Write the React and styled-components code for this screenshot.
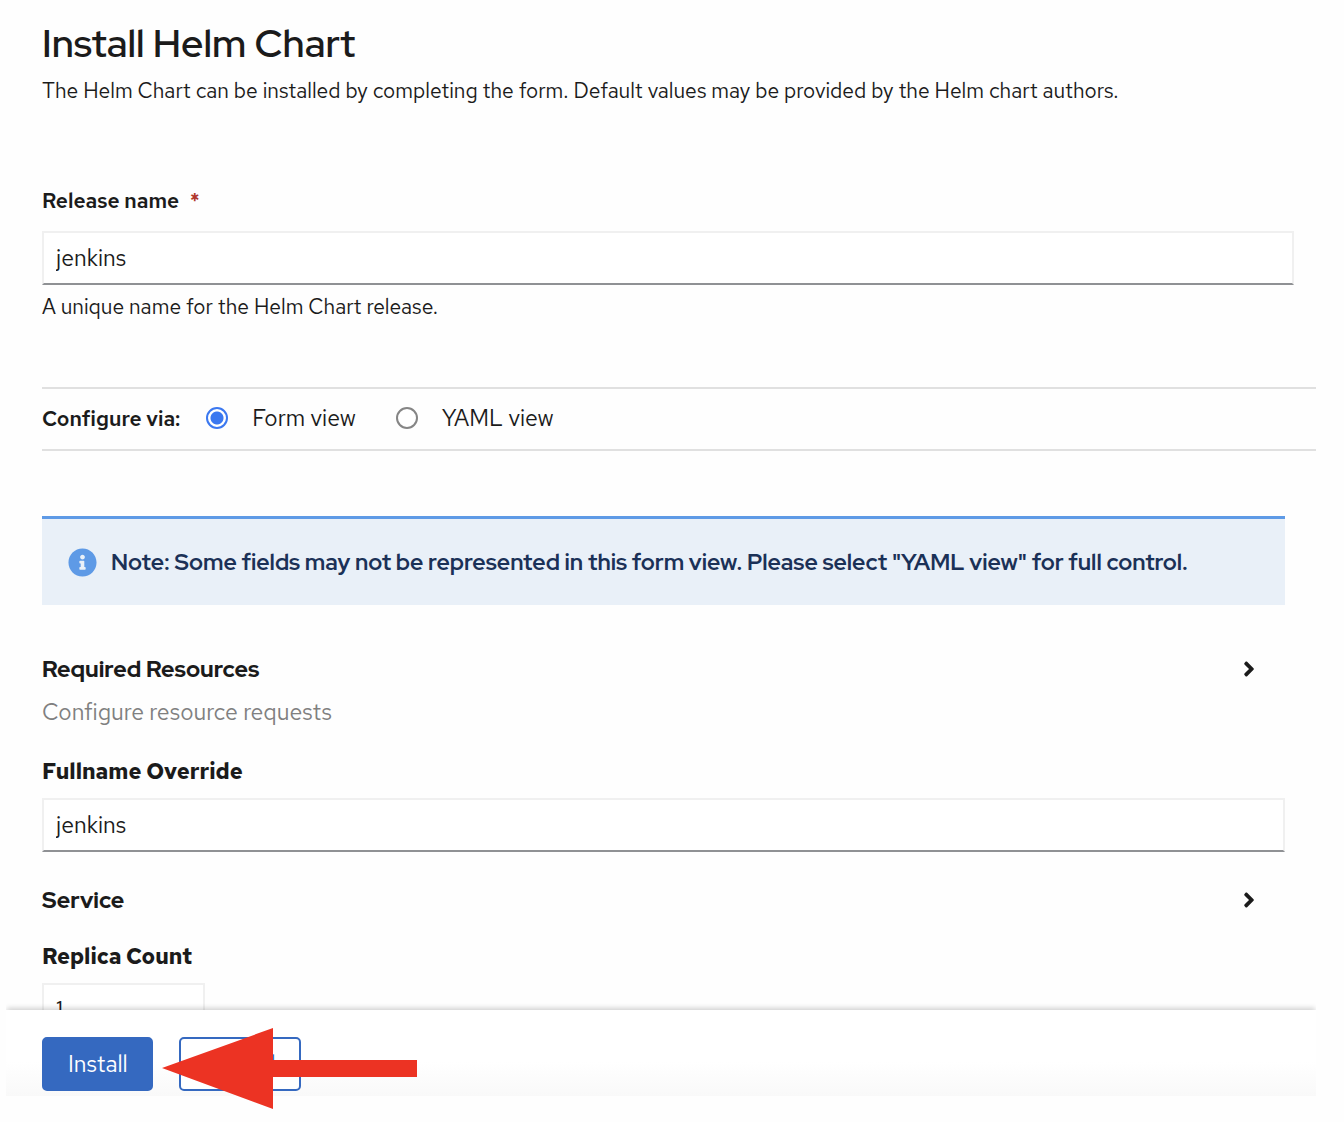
import React, { useState } from 'react';
import styled, { createGlobalStyle } from 'styled-components';
import { FaAngleRight, FaInfoCircle } from 'react-icons/fa';

const GlobalStyle = createGlobalStyle`
  *, *::before, *::after { box-sizing: border-box; }
  body {
    margin: 0;
    background: #fefefe;
    color: #1b1b1b;
    font-family: "Red Hat Text", Inter, "Liberation Sans", sans-serif;
    font-size: 21px;
    line-height: 32px;
  }
  h1, p { margin: 0; }
  input, button { font: inherit; color: inherit; }
`;

const displayFont = '"Red Hat Display", "Red Hat Text", Inter, "Liberation Sans", sans-serif';

const Shell = styled.main`
  display: flex;
  flex-direction: column;
  height: calc(100vh - 26px);
  margin: 0 28px 0 6px;
`;

const FormBody = styled.form`
  flex: 1;
  min-height: 0;
  overflow-y: auto;
  scrollbar-width: none;
  padding: 19px 0 24px 36px;
`;

const Title = styled.h1`
  font-family: ${displayFont};
  font-size: 39px;
  line-height: 48px;
  font-weight: 600;
`;

const Intro = styled.p`
  margin-top: 8px;
`;

const Field = styled.div`
  display: flex;
  flex-direction: column;
  align-items: flex-start;
  gap: ${(p) => p.$gap || 10}px;
`;

const ReleaseField = styled(Field)`
  margin: 78px 22px 64px 0;
`;

const Label = styled.label`
  font-size: ${(p) => (p.$section ? 22 : 21)}px;
  font-weight: ${(p) => (p.$section ? 700 : 600)};
`;

const Required = styled.span`
  margin-left: 6px;
  color: #b1382c;
`;

const TextInput = styled.input`
  width: ${(p) => p.$width || '100%'};
  height: 54px;
  padding: 0 12px;
  border: 2px solid #f0f0f0;
  border-bottom-color: #8f9194;
  border-radius: 0;
  background: #ffffff;
  font-size: 23px;
  outline: none;
`;

const Help = styled.p`
  margin-top: -8px;
`;

const ViewSwitch = styled.div`
  display: flex;
  align-items: center;
  height: 64px;
  border: solid #e0e0e0;
  border-width: 2px 0;
`;

const SwitchTitle = styled.span`
  margin-right: 26px;
  font-weight: 600;
`;

const Choice = styled.label`
  display: flex;
  align-items: center;
  gap: 24px;
  margin-right: 40px;
  padding-bottom: 2px;
  font-size: 23px;
`;

const Radio = styled.input`
  appearance: none;
  width: 22px;
  height: 22px;
  margin: 0;
  border: 2px solid #858585;
  border-radius: 50%;
  background: #ffffff;

  &:checked {
    border-color: #3b78f0;
    background: radial-gradient(circle, #3b78f0 0 6px, #ffffff 7px);
  }
`;

const Sections = styled.div`
  display: flex;
  flex-direction: column;
  margin: 65px 31px 0 0;
`;

const Alert = styled.div`
  display: flex;
  align-items: center;
  gap: 14px;
  height: 89px;
  margin-bottom: 48px;
  padding: 0 26px;
  border-top: 3px solid #5e9ae6;
  background: #e9f0f8;
  color: #1b3157;
  font-family: ${displayFont};
  font-size: 23px;
  font-weight: 700;

  svg { flex: none; color: #5e9ae6; }
`;

const Group = styled.section`
  display: flex;
  flex-direction: column;
  gap: 11px;
  margin-bottom: ${(p) => p.$space}px;
`;

const GroupToggle = styled.button`
  display: flex;
  align-items: center;
  justify-content: space-between;
  width: 100%;
  padding: 0 24px 0 0;
  border: 0;
  background: none;
  font-family: ${displayFont};
  font-size: 23px;
  font-weight: 800;
  text-align: left;
`;

const GroupHint = styled.p`
  color: #808080;
  font-size: 23px;
`;

const SectionField = styled(Field)`
  margin-bottom: 32px;
`;

const Footer = styled.footer`
  position: relative;
  display: flex;
  gap: 26px;
  padding: 27px 36px 5px;
  background: linear-gradient(#ffffff 60%, #f9f9f9);
  box-shadow: 0 -3px 5px -1px rgba(0, 0, 0, 0.18);
  clip-path: inset(-8px 0 0 0);
`;

const Button = styled.button`
  height: 54px;
  padding: 0 23px 0 24px;
  border: 2px solid #3569c0;
  border-radius: 5px;
  background: ${(p) => (p.$primary ? '#3569c0' : '#ffffff')};
  color: ${(p) => (p.$primary ? '#ffffff' : '#3569c0')};
  font-size: 23px;
`;

const Pointer = styled.svg`
  position: absolute;
  left: 162px;
  bottom: 13px;
  pointer-events: none;
`;

function Section({ title, hint, space }) {
  return (
    <Group $space={space}>
      <GroupToggle type="button" aria-expanded="false">
        {title}
        <FaAngleRight size={24} />
      </GroupToggle>
      {hint && <GroupHint>{hint}</GroupHint>}
    </Group>
  );
}

export default function App() {
  const [view, setView] = useState('form');

  return (
    <>
      <GlobalStyle />
      <Shell>
        <FormBody id="helm-form">
          <Title>Install Helm Chart</Title>
          <Intro>
            The Helm Chart can be installed by completing the form. Default values may be provided by the Helm chart authors.
          </Intro>
          <ReleaseField $gap={14}>
            <Label htmlFor="release">
              Release name <Required>*</Required>
            </Label>
            <TextInput id="release" defaultValue="jenkins" />
            <Help>A unique name for the Helm Chart release.</Help>
          </ReleaseField>
          <ViewSwitch role="radiogroup" aria-labelledby="view-title">
            <SwitchTitle id="view-title">Configure via:</SwitchTitle>
            <Choice>
              <Radio type="radio" name="view" checked={view === 'form'} onChange={() => setView('form')} />
              Form view
            </Choice>
            <Choice>
              <Radio type="radio" name="view" checked={view === 'yaml'} onChange={() => setView('yaml')} />
              YAML view
            </Choice>
          </ViewSwitch>
          <Sections>
            <Alert>
              <FaInfoCircle size={29} />
              Note: Some fields may not be represented in this form view. Please select "YAML view" for full control.
            </Alert>
            <Section title="Required Resources" hint="Configure resource requests" space={28} />
            <SectionField>
              <Label htmlFor="fullname" $section>Fullname Override</Label>
              <TextInput id="fullname" defaultValue="jenkins" />
            </SectionField>
            <Section title="Service" space={25} />
            <SectionField>
              <Label htmlFor="replicas" $section>Replica Count</Label>
              <TextInput id="replicas" defaultValue="1" $width="163px" />
            </SectionField>
          </Sections>
        </FormBody>
        <Footer>
          <Button type="submit" form="helm-form" $primary>Install</Button>
          <Button type="button">Cancel</Button>
        </Footer>
      </Shell>
      <Pointer width="256" height="81" viewBox="0 0 256 81" aria-hidden="true">
        <path d="M0 40 111 0V32L255 32V49L111 49V81Z" fill="#ec3323" />
      </Pointer>
    </>
  );
}
